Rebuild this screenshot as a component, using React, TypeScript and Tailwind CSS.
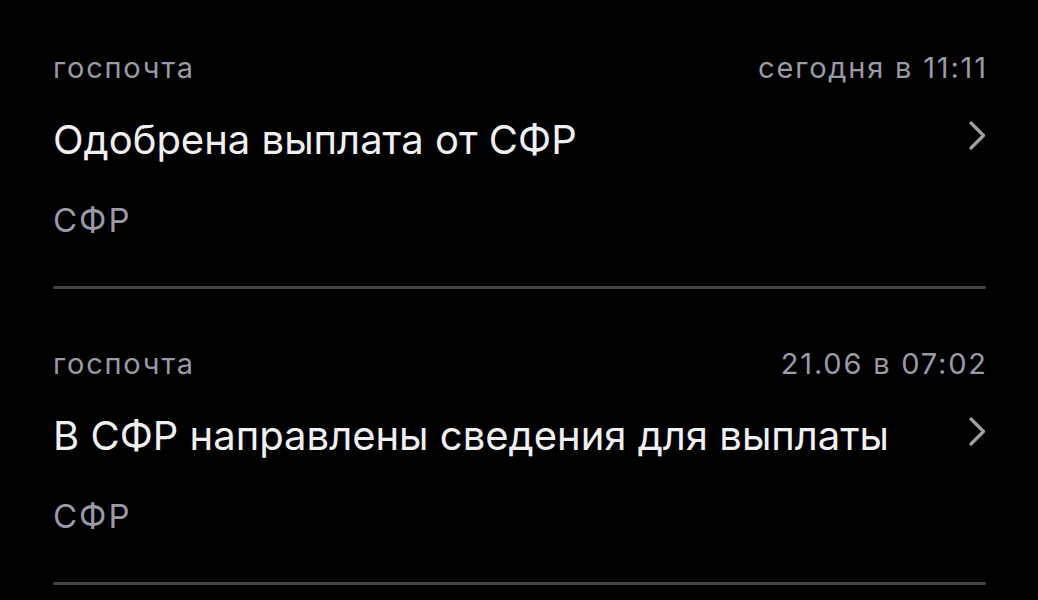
import React from "react";

const items = [
  { src: "госпочта", date: "сегодня в 11:11", title: "Одобрена выплата от СФР", sub: "СФР" },
  { src: "госпочта", date: "21.06 в 07:02", title: "В СФР направлены сведения для выплаты", sub: "СФР" },
];

function Chevron() {
  return (
    <svg width="17" height="29" viewBox="0 0 17 29" fill="none" className="shrink-0 mt-[5px]">
      <path d="M2 2 L14.5 14.5 L2 27" stroke="#9d9da6" strokeWidth="3.2" strokeLinecap="round" strokeLinejoin="round" />
    </svg>
  );
}

export default function App() {
  return (
    <div
      className="w-[1038px] h-[600px] overflow-hidden bg-black pl-[53px] pr-[52px] pt-[51px]"
      style={{ fontFamily: 'Inter, "Noto Sans", sans-serif' }}
    >
      {items.map((it, i) => (
        <div key={i} className={i > 0 ? "pt-[58px]" : ""}>
          <div className="flex justify-between text-[29px] leading-[34px] tracking-[1.8px] text-[#9a9aa6]">
            <span>{it.src}</span>
            <span className="mr-[-1.8px]">{it.date}</span>
          </div>
          <div className="mt-[31px] flex items-start justify-between">
            <span className="text-[40px] leading-[48px] text-[#f0f0f2]">{it.title}</span>
            <Chevron />
          </div>
          <div className="mt-[36px] text-[33px] leading-[40px] tracking-[2px] text-[#9a9aa6]">{it.sub}</div>
          <div className="mt-[46px] h-[3px] bg-[#444448] rounded-full" />
        </div>
      ))}
    </div>
  );
}
